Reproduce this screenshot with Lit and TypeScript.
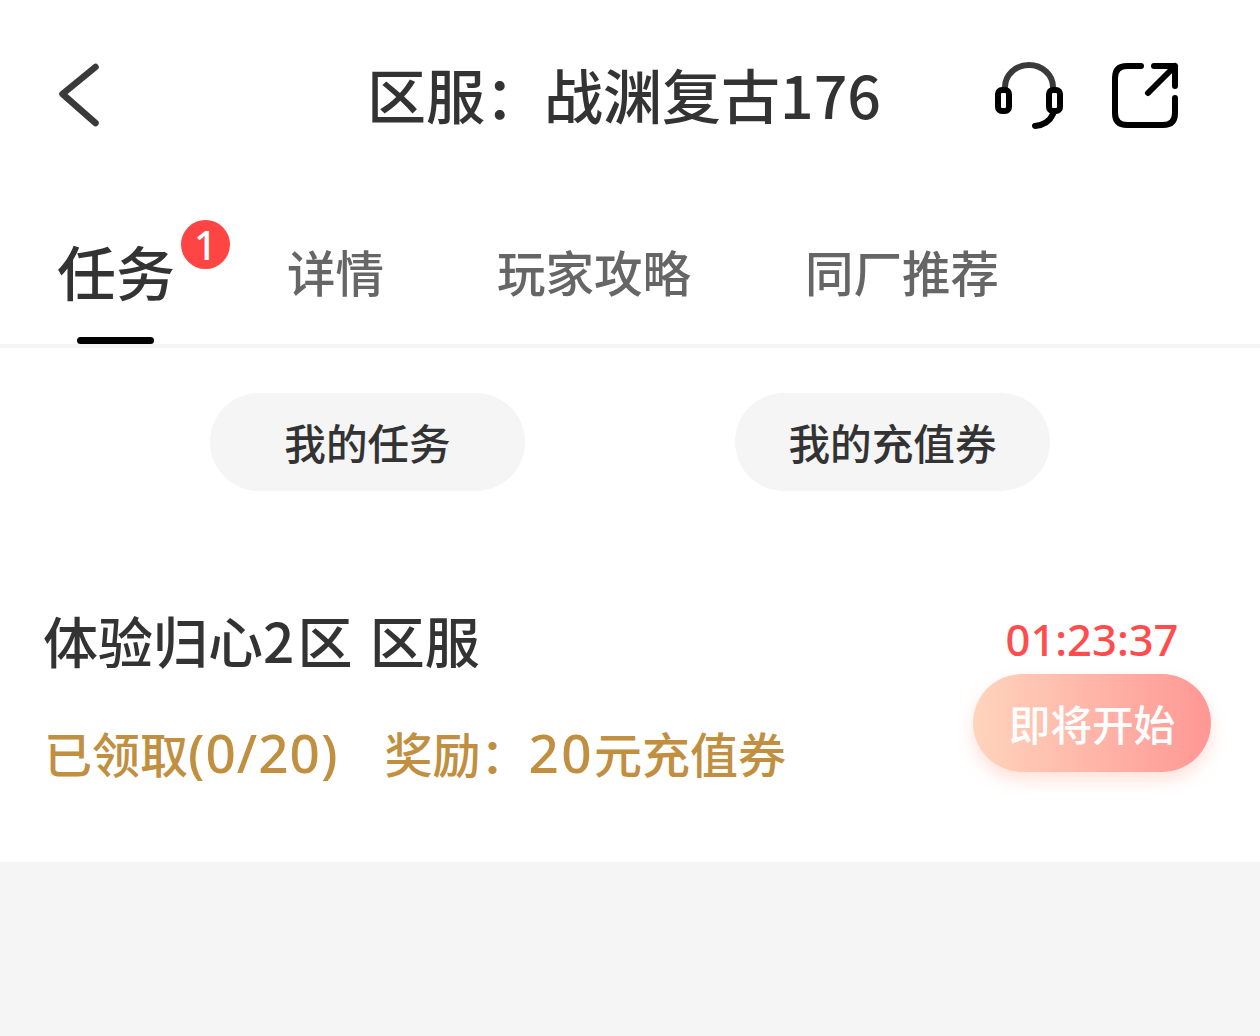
import { LitElement, html, css } from "lit";
import { customElement } from "lit/decorators.js";

@customElement("app-root")
export class AppRoot extends LitElement {
  static styles = css`
    :host { display: block; width: 1260px; height: 1036px; background: #f5f5f5; overflow: hidden;
      font-family: "Noto Sans CJK SC", "Noto Sans", sans-serif; color: #333; font-weight: 500; }
    .white { background: #fff; height: 862px; }
    .header { height: 190px; display: flex; align-items: flex-start; position: relative; }
    .back { margin: 60px 0 0 52px; width: 56px; height: 70px; display: block; }
    .title { position: absolute; left: 367px; top: 53px; font-size: 59px; line-height: 82px; white-space: nowrap; }
    .hicons { margin-left: auto; display: flex; gap: 44px; margin-right: 80px; margin-top: 56px; }
    .tabs { height: 154px; display: flex; padding-left: 57px; border-bottom: 4px solid #f5f5f5; position: relative; }
    .tab { font-size: 48.5px; line-height: 66px; color: #666; margin-top: 48px; white-space: nowrap; }
    .tab.active { font-size: 59px; color: #333; position: relative; margin-right: 112px; }
    .tab.second { margin-right: 113px; }
    .tab.third { margin-right: 114px; }
    .bar { position: absolute; left: 20px; top: 99px; width: 77px; height: 7px; border-radius: 4px; background: #000; }
    .badge { position: absolute; left: 124px; top: -18px; width: 49px; height: 49px; border-radius: 50%; background: #ff4444; color: #fff;
      font-size: 40px; line-height: 49px; text-align: center; font-family: "Noto Sans", sans-serif; }
    .pills { display: flex; justify-content: center; gap: 210px; margin-top: 45px; }
    .pill { width: 315px; height: 98px; border-radius: 49px; background: #f5f5f5; text-align: center; font-size: 41.6px; line-height: 98px; }
    .task { display: flex; justify-content: space-between; margin-top: 110px; padding: 0 49px 0 43px; }
    .name { font-size: 55px; line-height: 72px; margin-top: 2px; white-space: pre; word-spacing: 5px; }
    .digit { letter-spacing: 3px; }
    .reward { font-size: 48px; line-height: 66px; color: #c08f3f; margin-top: 44px; white-space: pre; display: flex; padding-left: 1px; }
    .num { font-family: "Noto Sans", sans-serif; font-size: 53px; letter-spacing: 1px; }
    .num.wide { letter-spacing: 2.5px; }
    .sep { width: 46px; }
    .side { display: flex; flex-direction: column; align-items: center; width: 238px; }
    .timer { font-size: 43.5px; line-height: 60px; color: #ff4d4d; margin-top: 8px; font-family: "Noto Sans", sans-serif; }
    .go { width: 238px; height: 98px; border-radius: 49px; margin-top: 5px; background: linear-gradient(90deg, #ffd4bc, #ff9795);
      box-shadow: 0 8px 16px rgba(255, 170, 150, 0.35); color: #fff; font-size: 41.6px; line-height: 99px; text-align: center; }
    svg { display: block; fill: none; stroke-linecap: round; stroke-linejoin: round; }
  `;

  render() {
    return html`
      <div class="white">
        <div class="header">
          <svg class="back" viewBox="0 0 56 70" stroke="#3a3a3a" stroke-width="6.5">
            <path d="M43.5 7 L10.5 34 L43.5 63" />
          </svg>
          <div class="title">区服：战渊复古176</div>
          <div class="hicons">
            <svg width="70" height="80" viewBox="0 0 70 80">
              <path d="M11 31 A24 22 0 0 1 59 31" stroke="#3a3a3a" stroke-width="6" />
              <rect x="4" y="34" width="11" height="21" rx="4" stroke="#000" stroke-width="6" />
              <rect x="55" y="34" width="11" height="21" rx="4" stroke="#000" stroke-width="6" />
              <path d="M59 58 C56 65 50 69 41 70" stroke="#000" stroke-width="6" />
            </svg>
            <svg width="72" height="80" viewBox="0 0 72 80" stroke="#000" stroke-width="6">
              <path d="M33 10 H19 Q7 10 7 22 V57 Q7 69 19 69 H55 Q67 69 67 57 V42" />
              <path d="M46 10 H67 V30 M67 10 L40 37" />
            </svg>
          </div>
        </div>
        <div class="tabs">
          <div class="tab active">任务<span class="badge">1</span><span class="bar"></span></div>
          <div class="tab second">详情</div>
          <div class="tab third">玩家攻略</div>
          <div class="tab">同厂推荐</div>
        </div>
        <div class="pills">
          <div class="pill">我的任务</div>
          <div class="pill">我的充值券</div>
        </div>
        <div class="task">
          <div>
            <div class="name">体验归心<span class="digit">2</span>区 区服</div>
            <div class="reward"><span>已领取<span class="num">(0/20)</span></span><span class="sep"></span><span>奖励：<span class="num wide">20</span>元充值券</span></div>
          </div>
          <div class="side">
            <div class="timer">01:23:37</div>
            <div class="go">即将开始</div>
          </div>
        </div>
      </div>
    `;
  }
}
